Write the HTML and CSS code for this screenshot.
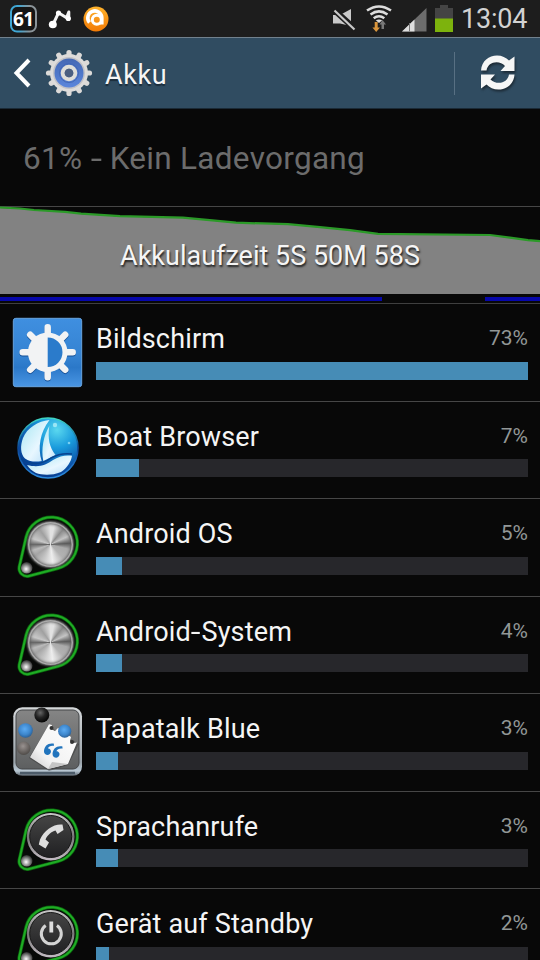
FILE: index.html
```html
<!DOCTYPE html>
<html lang="de">
<head>
<meta charset="utf-8">
<title>Akku</title>
<link rel="stylesheet" href="styles.css">
</head>
<body>
<svg class="defs" width="0" height="0" aria-hidden="true">
  <defs>
    <linearGradient id="tile" x1="0" y1="0" x2="0" y2="1"><stop offset="0" stop-color="#3f8fe0"/><stop offset=".55" stop-color="#3583d2"/><stop offset=".72" stop-color="#2b78c8"/><stop offset="1" stop-color="#4a96e4"/></linearGradient>
    <linearGradient id="rim" x1="0" y1="0" x2="0" y2="1"><stop offset="0" stop-color="#c9c9c9"/><stop offset=".5" stop-color="#777"/><stop offset="1" stop-color="#c4bcc4"/></linearGradient>
    <linearGradient id="dark" x1="0" y1="0" x2="0" y2="1"><stop offset="0" stop-color="#454545"/><stop offset="1" stop-color="#202022"/></linearGradient>
    <radialGradient id="bead" cx=".45" cy=".6" r=".6"><stop offset="0" stop-color="#fff"/><stop offset=".4" stop-color="#aaa"/><stop offset="1" stop-color="#2a2a2a"/></radialGradient>
    <radialGradient id="sea" cx=".65" cy=".2" r=".85"><stop offset="0" stop-color="#5ad8ef"/><stop offset=".35" stop-color="#1a9bdc"/><stop offset=".75" stop-color="#0a4fa6"/><stop offset="1" stop-color="#073888"/></radialGradient>
    <linearGradient id="seaRim" x1="0" y1="0" x2="0" y2="1"><stop offset="0" stop-color="#3fd6c4"/><stop offset=".5" stop-color="#0c4796"/><stop offset="1" stop-color="#2c8de0"/></linearGradient>
    <linearGradient id="sail" x1="0" y1="0" x2="1" y2="1"><stop offset="0" stop-color="#a5e6f2"/><stop offset=".6" stop-color="#e8f7ff"/><stop offset="1" stop-color="#b5ddf7"/></linearGradient>
    <linearGradient id="frame" x1="0" y1="0" x2="0" y2="1"><stop offset="0" stop-color="#d5d8da"/><stop offset=".8" stop-color="#9aa3aa"/><stop offset=".93" stop-color="#b9c8d4"/><stop offset="1" stop-color="#59626b"/></linearGradient>
    <linearGradient id="board" x1="0" y1="0" x2="0" y2="1"><stop offset="0" stop-color="#858585"/><stop offset="1" stop-color="#5d5f60"/></linearGradient>
    <radialGradient id="blueBall" cx=".45" cy=".4" r=".65"><stop offset="0" stop-color="#5cabf2"/><stop offset=".6" stop-color="#3d86cc"/><stop offset="1" stop-color="#28588a"/></radialGradient>
    <radialGradient id="blackBall" cx=".4" cy=".35" r=".65"><stop offset="0" stop-color="#666"/><stop offset=".5" stop-color="#252525"/><stop offset="1" stop-color="#050505"/></radialGradient>
    <radialGradient id="grayBall" cx=".45" cy=".35" r=".65"><stop offset="0" stop-color="#999290"/><stop offset="1" stop-color="#504c49"/></radialGradient>
    <linearGradient id="paper" x1="1" y1="0" x2="0" y2="1"><stop offset="0" stop-color="#fff"/><stop offset=".7" stop-color="#f2f2f2"/><stop offset="1" stop-color="#c8c8c8"/></linearGradient>
    <linearGradient id="gearBlue" x1="0" y1="0" x2="0" y2="1"><stop offset="0" stop-color="#4468b4"/><stop offset="1" stop-color="#5b86dc"/></linearGradient>
    <linearGradient id="orange" x1="0" y1="0" x2="0" y2="1"><stop offset="0" stop-color="#ffb32c"/><stop offset="1" stop-color="#f27a05"/></linearGradient>
    <linearGradient id="badge" x1="0" y1="0" x2="1" y2="0"><stop offset=".3" stop-color="#3fa6d3"/><stop offset=".75" stop-color="#8b9499"/></linearGradient>
    <g id="belt">
      <path d="M14.100 26A26 26 0 1 1 46.200 57.300L17 65A8 8 0 0 1 7.200 56z" fill="#070907" stroke="#0b650d" stroke-width="3.400"/>
      <path d="M14.100 26A26 26 0 1 1 46.200 57.300L17 65A8 8 0 0 1 7.200 56z" fill="none" stroke="#1fac25" stroke-width="2"/>
      <circle cx="14.700" cy="56.800" r="5.800" fill="url(#bead)"/>
    </g>
    <g id="button">
      <use href="#belt"/>
      <circle cx="38.700" cy="32.700" r="23.800" fill="url(#rim)"/>
      <circle cx="38.700" cy="32.500" r="21" fill="url(#dark)" stroke="#171717"/>
    </g>
  </defs>
</svg>

<div class="screen">
  <div class="status">
    <svg class="s-badge" width="28" height="28" viewBox="0 0 28 28">
      <rect x="1" y="1" width="25" height="25.600" rx="6" fill="#151515" stroke="url(#badge)" stroke-width="2"/>
      <text class="badge-text" x="13.300" y="20.500" text-anchor="middle">61</text>
    </svg>
    <svg class="s-note" width="25" height="22" viewBox="0 0 25 22">
      <path d="M5 15.500L10.500 3.800L18.500 8.800L20.800 3V10" fill="none" stroke="#f4f4f4" stroke-width="3" stroke-linejoin="round" stroke-linecap="round"/>
      <ellipse cx="4.800" cy="15.500" rx="4" ry="3.800" fill="#fff"/><circle cx="10.500" cy="4" r="2.600" fill="#fff"/><circle cx="20.300" cy="9.500" r="2.600" fill="#fff"/>
    </svg>
    <svg class="s-avast" width="26" height="26" viewBox="0 0 26 26">
      <circle cx="13" cy="13" r="12.500" fill="url(#orange)"/>
      <path d="M6.500 16.500A7 7 0 1 1 18.800 12V18.500" fill="none" stroke="#fff" stroke-width="3.600"/>
      <circle cx="13.800" cy="13.800" r="4.500" fill="none" stroke="#fff" stroke-width="3"/>
    </svg>
    <span class="spacer"></span>
    <svg class="s-mute" width="24" height="24" viewBox="0 0 24 24">
      <path d="M1 7h7L19 1v17L8 15.500H1z" fill="#c9c9c9"/>
      <path d="M0 0L23 21" stroke="#1d1d1d" stroke-width="6"/>
      <path d="M2.500 2.500L22.500 21.500" stroke="#c9c9c9" stroke-width="2.200"/>
    </svg>
    <svg class="s-wifi" width="26" height="28" viewBox="0 0 26 28">
      <g fill="none" stroke="#dcdcdc" stroke-width="2.500"><path d="M1 5.500Q13-2.700 25 5.500"/><path d="M4.500 9.500Q13 3.300 21.500 9.500"/><path d="M7.700 13.200Q13 9.200 18.300 13.200"/></g>
      <path d="M9.800 15.300Q13 13.500 16.200 15.300L13 18z" fill="#dcdcdc"/>
      <path d="M8.700 17h3v5.500h2.300l-3.800 4.500-3.800-4.500h2.300z" fill="#d9953c"/>
      <path d="M15.500 24v-4.500h-2l3-4.500 3.500 4.500h-2v4.500z" fill="#777"/>
    </svg>
    <svg class="s-signal" width="25" height="24" viewBox="0 0 25 24"><path d="M0 23.500L24.500 0v23.500z" fill="#6d6d6d"/><path d="M0 23.500L12.500 11.500v12z" fill="#dedede"/><path d="M7.500 15v8.500" stroke="#777" stroke-width="1"/></svg>
    <svg class="s-battery" width="18" height="28" viewBox="0 0 18 28"><path d="M5 0h8v3h5v24H0V3h5z" fill="#444"/><path d="M0 13.500h18V27H0z" fill="#7db30d"/></svg>
    <span class="clock">13:04</span>
  </div>

  <div class="header">
    <svg class="back" width="18" height="30" viewBox="0 0 18 30"><path d="M16 2L3.500 15L16 28" fill="none" stroke="#fff" stroke-width="4"/></svg>
    <svg class="gear" width="48" height="48" viewBox="-24 -24 48 48">
      <g stroke="#dcdad8" stroke-width="5.200" stroke-linecap="round">
        <path d="M0-20.500V20.500"/><path d="M0-20.500V20.500" transform="rotate(30)"/><path d="M0-20.500V20.500" transform="rotate(60)"/><path d="M0-20.500V20.500" transform="rotate(90)"/><path d="M0-20.500V20.500" transform="rotate(120)"/><path d="M0-20.500V20.500" transform="rotate(150)"/>
      </g>
      <circle r="19" fill="#dedcda"/><circle r="16" fill="#c2c2c6"/>
      <circle r="14.500" fill="url(#gearBlue)"/>
      <circle r="9.500" fill="none" stroke="#4267b5" stroke-width="1"/>
      <circle r="6.300" fill="#304d8a" stroke="#deded9" stroke-width="4"/>
      <circle r="4.300" fill="#4a5f80"/>
    </svg>
    <h1 class="title">Akku</h1>
    <span class="spacer"></span>
    <span class="separator"></span>
    <svg class="refresh" width="36" height="38" viewBox="0 0 36 38">
      <g fill="#f6f6f6">
        <path d="M1 16.500C1.500 7 9 1.500 17 1.500C22 1.500 26 3.500 29 6.500L34.500 2.500V17H20.500L25 12C22.500 9.300 20 8.200 16.500 8.200C11.500 8.200 7.500 11 6.500 16.500z"/>
        <path d="M34.500 20.500C34 30 26.500 35.500 18.500 35.500C13.500 35.500 9.500 33.500 6.500 30.500L1 34.500V20.500H15L10.500 25.500C13 28 15.500 28.800 19 28.800C24 28.800 28 26 29 20.500z"/>
      </g>
    </svg>
  </div>

  <div class="level">61% <span class="hyphen">-</span> Kein Ladevorgang</div>

  <div class="chart">
    <svg class="graph" width="540" height="87" viewBox="0 0 540 87">
      <path d="M0 1L20 1.500L34 3L65 5L81 7L120 9.500L183 11L215 14L236 16L288 17.500L320 20.500L350 23.500L378 27.200L490 28.300L510 31L528 33.500L540 34.500V87H0z" fill="#828282"/>
      <path d="M0 0.500L20 1.500L34 3L65 4.800L81 6.700L120 9.200L183 10.700L215 13.700L236 15.700L288 17.200L320 20.200L350 23.200L378 26.900L490 28L510 30.700L528 33.200L540 34.200" fill="none" stroke="#2b9a28" stroke-width="2.200"/>
    </svg>
    <div class="runtime">Akkulaufzeit 5S 50M 58S</div>
    <div class="activity"><span class="run-first"></span><span class="run-last"></span></div>
  </div>

  <div class="row">
    <svg class="icon" viewBox="0 0 72 72">
      <rect x="1.300" y="2.300" width="68.400" height="68.400" rx="2.500" fill="url(#tile)" stroke="#68a4df"/>
      <g stroke="#175197" stroke-width="6.500" stroke-linecap="round" transform="translate(35.700 37.300)"><path d="M0-25V25M-25 0H25M-17.500-17.500L17.500 17.500M-17.500 17.500L17.500-17.500"/></g>
      <g stroke="#f2f3f4" stroke-width="6.500" stroke-linecap="round" transform="translate(35.700 36.300)"><path d="M0-25V25M-25 0H25M-17.500-17.500L17.500 17.500M-17.500 17.500L17.500-17.500"/><circle r="19.800" fill="#f2f3f4" stroke="none"/><path d="M0-14.800A14.800 14.800 0 0 1 0 14.800z" fill="#2b7bcb" stroke="none"/></g>
    </svg>
    <div class="info"><div class="line"><span class="name">Bildschirm</span><span class="pct">73%</span></div><div class="bar"><div class="fill" style="width:432px"></div></div></div>
  </div>

  <div class="row short">
    <svg class="icon" viewBox="0 0 72 72">
      <circle cx="36" cy="34" r="30" fill="url(#sea)" stroke="url(#seaRim)" stroke-width="1.600"/>
      <path d="M37.500 6C26 7 15 14 11 24C8 32 8.500 40 13 44.500C18 48 24 48 29.700 47C25.500 34 28 18 37.500 6z" fill="url(#sail)"/>
      <path d="M37.300 12C35.500 25 37.500 33 43.500 41L31.300 47C29 35 31.500 22 37.300 12z" fill="url(#sail)"/>
      <path d="M15 51C27 54 34 51 41 46C48 41.500 54 41 60 41.700C59 48 55 54 49 58C39 62 30 61 24 59C20 57 17 54 15 51z" fill="url(#sail)"/>
      <path d="M9 45C20 52 31 50 39 44C46 40 53 39 60 40" fill="none" stroke="#07438f" stroke-width="1.500"/>
      <circle cx="43" cy="11" r="2.200" fill="#bff4fa" opacity=".7"/><circle cx="57" cy="29" r="1.300" fill="#78cff2"/>
    </svg>
    <div class="info"><div class="line"><span class="name">Boat Browser</span><span class="pct">7%</span></div><div class="bar"><div class="fill" style="width:43px"></div></div></div>
  </div>

  <div class="row">
    <svg class="icon" viewBox="0 0 72 72"><use href="#belt"/><foreignObject x="14" y="9" width="49" height="49"><div class="metal"></div></foreignObject></svg>
    <div class="info"><div class="line"><span class="name">Android OS</span><span class="pct">5%</span></div><div class="bar"><div class="fill" style="width:26px"></div></div></div>
  </div>

  <div class="row short">
    <svg class="icon" viewBox="0 0 72 72"><use href="#belt"/><foreignObject x="14" y="9" width="49" height="49"><div class="metal"></div></foreignObject></svg>
    <div class="info"><div class="line"><span class="name">Android<span class="hyphen tight">-</span>System</span><span class="pct">4%</span></div><div class="bar"><div class="fill" style="width:26px"></div></div></div>
  </div>

  <div class="row">
    <svg class="icon" viewBox="0 0 72 72">
      <rect x="1.300" y="1.300" width="68.700" height="68.500" rx="9" fill="url(#frame)"/>
      <path d="M8 67H63" stroke="#4c5b69" stroke-width="2.500"/>
      <rect x="4" y="4" width="63" height="59" rx="6" fill="url(#board)" stroke="#454749"/>
      <circle cx="13.500" cy="24.500" r="7.300" fill="url(#blueBall)"/>
      <circle cx="11.700" cy="42.200" r="6.700" fill="url(#grayBall)"/>
      <circle cx="29.800" cy="9" r="7.500" fill="url(#blackBall)"/>
      <path d="M36 20L17 52L37 65L56 59L67 38z" fill="#333" opacity=".45"/>
      <path d="M37 18.300L40 19L39 23L43 25L46 22L49 24L48 28L52 31L56 29L59 31L58 35L61 37L65 36.500L56 58L36 63L18 51.300z" fill="url(#paper)"/>
      <path d="M36 63L40 56L56 58z" fill="#c5c5c5"/>
      <circle cx="52.700" cy="25.200" r="6.600" fill="url(#blueBall)"/>
      <circle cx="39.500" cy="22" r="2" fill="#333"/><circle cx="60" cy="36" r="2" fill="#333"/>
      <g fill="#2174bd" transform="translate(40.500 44.500) rotate(18)"><path id="quote" d="M-1-7C-7-6-9-2-8 3C-7 7-1 7-1 2.500C-1 0-3-1-5-.5C-5-3-3-4.500 0-5z"/><use href="#quote" x="9"/></g>
    </svg>
    <div class="info"><div class="line"><span class="name">Tapatalk Blue</span><span class="pct">3%</span></div><div class="bar"><div class="fill" style="width:22px"></div></div></div>
  </div>

  <div class="row short">
    <svg class="icon" viewBox="0 0 72 72">
      <use href="#button"/>
      <path d="M50.500 20.500C42 19.500 32 26 28 35.500L26.800 40.500L33.500 44.500L37 38.500L33.500 35.500C35.500 31 39.500 27.500 43.500 26.500L45.500 30L51.500 26z" fill="#dedede"/>
    </svg>
    <div class="info"><div class="line"><span class="name">Sprachanrufe</span><span class="pct">3%</span></div><div class="bar"><div class="fill" style="width:22px"></div></div></div>
  </div>

  <div class="row">
    <svg class="icon" viewBox="0 0 72 72">
      <use href="#button"/>
      <path d="M33.700 24.500A10 10 0 1 0 44.900 24.500" fill="none" stroke="#d4d4d4" stroke-width="3"/><path d="M39.300 20.500V31.500" stroke="#ddd" stroke-width="3.800"/>
    </svg>
    <div class="info"><div class="line"><span class="name">Gerät auf Standby</span><span class="pct">2%</span></div><div class="bar"><div class="fill" style="width:13px"></div></div></div>
  </div>
</div>
</body>
</html>
```
FILE: styles.css
```css
* { box-sizing: border-box; }
html, body { margin: 0; height: 960px; overflow: hidden; background: #080808; }
body { font-family: Roboto, "Liberation Sans", sans-serif; color: #f5f5f5; }
svg { display: block; flex: none; }
.defs { position: absolute; }
.screen { display: flex; flex-direction: column; width: 540px; height: 960px; overflow: hidden; }
.screen > * { flex: none; }
.spacer { flex: 1; }
.hyphen { display: inline-block; margin: 0 1px; transform: scaleX(1.3); }
.hyphen.tight { margin: 0 1.5px; }

.status { display: flex; align-items: flex-start; height: 37px; padding: 5px 12px 0 10px; background: #1d1d1d; }
.badge-text { font: 700 19px "Noto Sans", sans-serif; letter-spacing: -.5px; fill: #fff; }
.s-note { margin: 4px 0 0 10px; }
.s-avast { margin: 1px 0 0 10px; }
.s-mute { margin: 3px 10px 0 0; }
.s-wifi { margin-right: 10px; }
.s-signal { margin: 3px 8px 0 0; }
.s-battery { margin-right: 8px; }
.clock { width: 67px; padding-top: 1px; font-size: 27px; line-height: 27px; letter-spacing: -.2px; color: #d2d2d2; white-space: nowrap; }

.header { display: flex; align-items: center; height: 72px; padding: 0 24px 0 13px; background: #304c61; border-top: 1px solid #71818d; border-bottom: 1px solid #1b2a36; }
.gear { margin: 0 0 0 14px; }
.title { margin: 4px 0 0 12px; font-size: 27px; font-weight: 400; line-height: 32px; letter-spacing: .6px; text-shadow: 0 2px 1px #1b2c3a; }
.separator { width: 1px; height: 43px; margin-right: 25px; background: #587083; }
.refresh { filter: drop-shadow(1px 2px 1px #1c2a35); }

.level { height: 98px; padding: 1px 23px 0; border-bottom: 1px solid #464646; color: #6c6c6c; font-size: 31.500px; line-height: 98px; letter-spacing: .3px; white-space: nowrap; }

.chart { display: grid; grid-template-rows: 87px 9px 1px; height: 97px; border-bottom: 1px solid #3f3f3f; }
.graph, .runtime { grid-area: 1 / 1; }
.graph { overflow: visible; }
.runtime { padding-top: 33px; text-align: center; font-size: 27px; line-height: 32px; text-shadow: 1px 2px 2px #222; z-index: 1; }
.activity { grid-row: 2; display: flex; justify-content: space-between; align-items: center; padding-top: 1px; }
.activity span { height: 4px; background: #0707aa; }
.run-first { width: 382px; }
.run-last { width: 55px; }

.row { display: flex; gap: 12px; height: 98px; padding: 12px 12px 0; border-bottom: 1px solid #464646; }
.row.short { height: 97px; }
.icon { width: 72px; height: 72px; }
.info { flex: 1; display: flex; flex-direction: column; justify-content: space-between; padding-bottom: 21px; }
.line { display: flex; justify-content: space-between; height: 32px; margin-top: 7px; line-height: 32px; white-space: nowrap; }
.name { font-size: 27px; letter-spacing: .15px; }
.pct { font-size: 21px; line-height: 30px; color: #929797; }
.bar { height: 18px; background: #27272b; }
.fill { height: 18px; background: #468cb6; }

.metal { width: 45px; height: 45px; margin: 2px; border-radius: 50%; box-shadow: inset 0 0 0 1.500px #aaa, inset 0 0 3px 2px #555, 0 0 2px 1px #777; background: conic-gradient(#e2e2e2 0 3%, #8c8c8c 11%, #c4c4c4 18%, #5c5c5c 24%, #aaa 29%, #b2b2b2 38%, #eee 48%, #c9c9c9 56%, #a5a5a5 65%, #bbb 70%, #686868 75%, #c8c8c8 80%, #a0a0a0 90%, #e2e2e2); }
```
